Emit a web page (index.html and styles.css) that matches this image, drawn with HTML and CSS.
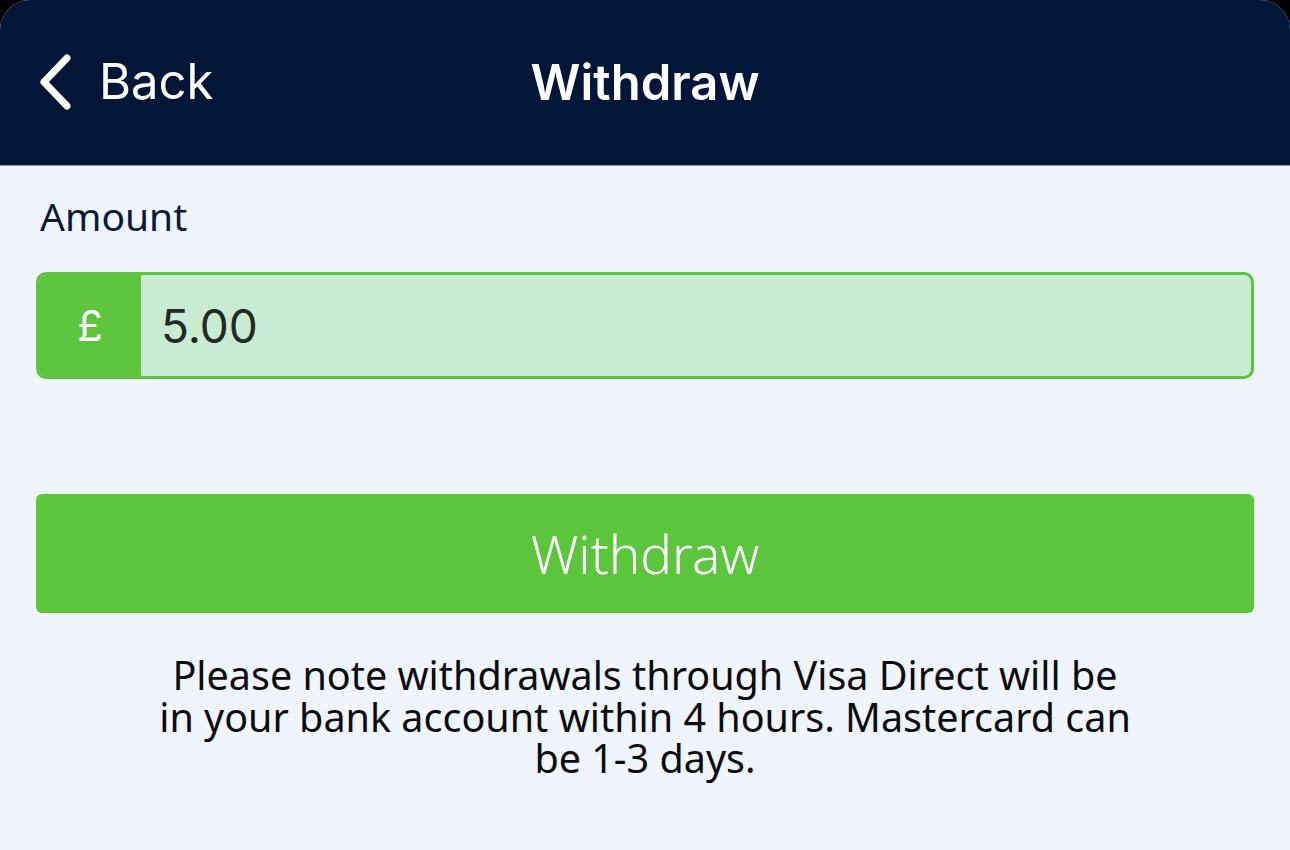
FILE: index.html
```html
<!DOCTYPE html>
<html lang="en">
<head>
    <meta charset="UTF-8">
    <title>Withdraw</title>
    <link rel="stylesheet" href="styles.css">
</head>
<body>
<div class="screen">
    <header class="topbar">
        <a class="back" href="#">
            <svg class="chevron" width="34" height="58" viewBox="0 0 34 58">
                <path d="M29 5 L6 29 L29 53" fill="none" stroke="#fff" stroke-width="7" stroke-linecap="round" stroke-linejoin="round"/>
            </svg>
            <span>Back</span>
        </a>
        <h1 class="title">Withdraw</h1>
    </header>

    <main class="content">
        <label class="label" for="amount">Amount</label>
        <div class="amount-field">
            <span class="currency">£</span>
            <input type="text" id="amount" class="amount-input" value="5.00"/>
        </div>

        <button class="withdraw-btn">Withdraw</button>

        <p class="note">Please note withdrawals through Visa Direct will be<br>in your bank account within 4 hours. Mastercard can<br>be 1-3 days.</p>
    </main>
</div>
</body>
</html>
```

FILE: styles.css
```css
html, body {
    margin: 0;
    padding: 0;
    background: #000;
}

.screen {
    width: 1290px;
    height: 850px;
    background: #eff4fd;
    border-radius: 30px 30px 0 0;
    overflow: hidden;
}

.topbar {
    height: 165px;
    background: #021638;
    border-bottom: 1px solid #8d97ab;
    position: relative;
    display: flex;
    align-items: center;
    justify-content: center;
}

.back {
    position: absolute;
    left: 38px;
    top: 52px;
    display: flex;
    align-items: center;
    gap: 27px;
    color: #fff;
    text-decoration: none;
    font-family: Inter, "Liberation Sans", sans-serif;
    font-size: 49px;
}

.chevron {
    display: block;
}

.title {
    margin: 0;
    color: #fff;
    font-family: Inter, "Liberation Sans", sans-serif;
    font-weight: 600;
    font-size: 49px;
}

.content {
    padding: 0 36px;
    display: flex;
    flex-direction: column;
}

.label {
    margin: 24px 0 0 4px;
    font-family: "Noto Sans", sans-serif;
    font-size: 39px;
    color: #0b1a3a;
    line-height: 52px;
}

.amount-field {
    margin-top: 30px;
    height: 107px;
    box-sizing: border-box;
    border: 3px solid #5cc43d;
    border-radius: 10px;
    display: flex;
    overflow: hidden;
    background: #c9ebd1;
}

.currency {
    width: 102px;
    background: #5cc43d;
    color: #fff;
    display: flex;
    align-items: center;
    justify-content: center;
    font-family: Inter, "Liberation Sans", sans-serif;
    font-size: 42px;
}

.amount-input {
    flex: 1;
    border: 0;
    outline: none;
    background: transparent;
    padding: 0 0 0 20px;
    font-family: Inter, "Liberation Sans", sans-serif;
    font-size: 46px;
    color: #222a26;
}

.withdraw-btn {
    margin-top: 115px;
    height: 119px;
    border: 0;
    border-radius: 6px;
    background: #5bc53c;
    color: #fff;
    font-family: "Noto Sans", sans-serif;
    font-weight: 300;
    font-size: 53px;
    cursor: pointer;
}

.note {
    margin: 42px 0 0;
    text-align: center;
    font-family: "Noto Sans", sans-serif;
    font-size: 39.5px;
    line-height: 41.5px;
    color: #0c0c10;
}
```
